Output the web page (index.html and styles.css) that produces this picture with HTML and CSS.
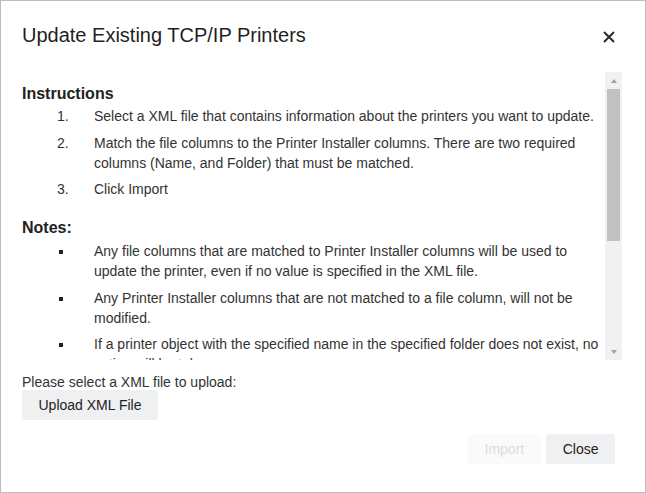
FILE: index.html
```html
<!DOCTYPE html>
<html lang="en">
<head>
<meta charset="utf-8">
<title>Update Existing TCP/IP Printers</title>
<link rel="stylesheet" href="styles.css">
</head>
<body>
<div class="dialog">
  <div class="header">
    <h2 class="title">Update Existing TCP/IP Printers</h2>
    <button class="close" aria-label="Close">
      <svg width="12" height="12" viewBox="0 0 12 12"><path d="M1 1L11 11M11 1L1 11" stroke="#2b2b2b" stroke-width="2" fill="none"/></svg>
    </button>
  </div>
  <div class="scroll-wrap">
    <div class="scroll-content">
      <h3 class="heading">Instructions</h3>
      <ol class="list list-num">
        <li><span class="marker">1.</span><span class="text">Select a XML file that contains information about the printers you want to update.</span></li>
        <li><span class="marker">2.</span><span class="text">Match the file columns to the Printer Installer columns. There are two required columns (Name, and Folder) that must be matched.</span></li>
        <li><span class="marker">3.</span><span class="text">Click Import</span></li>
      </ol>
      <h3 class="heading heading-notes">Notes:</h3>
      <ul class="list list-bullets">
        <li><span class="marker"><i class="square"></i></span><span class="text">Any file columns that are matched to Printer Installer columns will be used to update the printer, even if no value is specified in the XML file.</span></li>
        <li><span class="marker"><i class="square"></i></span><span class="text">Any Printer Installer columns that are not matched to a file column, will not be modified.</span></li>
        <li><span class="marker"><i class="square"></i></span><span class="text">If a printer object with the specified name in the specified folder does not exist, no action will be taken.</span></li>
      </ul>
    </div>
    <div class="scrollbar">
      <div class="sb-btn"><span class="tri-up"></span></div>
      <div class="sb-track"><div class="sb-thumb"></div></div>
      <div class="sb-btn"><span class="tri-down"></span></div>
    </div>
  </div>
  <div class="upload">
    <div class="upload-label">Please select a XML file to upload:</div>
    <button class="btn">Upload XML File</button>
  </div>
  <div class="footer">
    <button class="btn btn-disabled" disabled>Import</button>
    <button class="btn">Close</button>
  </div>
</div>
</body>
</html>
```
FILE: styles.css
```css
* { box-sizing: border-box; }
html, body { margin: 0; padding: 0; background: #fff; }
body { font-family: "Liberation Sans", Arial, sans-serif; color: #333; }

.dialog {
  width: 646px;
  height: 493px;
  border: 1px solid #bdbdbd;
  padding: 22px 23px 0 21px;
  background: #fff;
}

.header {
  display: flex;
  justify-content: space-between;
  align-items: flex-start;
  padding-right: 7px;
}
.title {
  margin: 0;
  font-size: 20px;
  font-weight: normal;
  line-height: 24px;
  color: #1f1f1f;
}
.close {
  margin: 8px 0 0;
  padding: 0;
  border: none;
  background: none;
  width: 12px;
  height: 12px;
  display: block;
}
.close svg { display: block; }

.scroll-wrap {
  display: flex;
  height: 288px;
  margin-top: 25px;
}
.scroll-content {
  flex: 1;
  overflow: hidden;
  padding-top: 13px;
}
.heading {
  margin: 0;
  font-size: 16px;
  font-weight: bold;
  line-height: 18px;
  color: #222;
}
.heading-notes { margin-top: 19.5px; }

.list {
  margin: 3px 0 0;
  padding: 0;
  list-style: none;
  font-size: 14px;
  line-height: 20px;
}
.list-bullets { margin-top: 4.5px; }
.list li {
  display: flex;
  padding-left: 35px;
  margin-bottom: 6.5px;
}
.marker {
  flex: 0 0 37px;
  width: 37px;
}
.text { flex: 1; }
.square {
  display: block;
  width: 4px;
  height: 4px;
  background: #222;
  margin: 9px 0 0 2px;
}

.scrollbar {
  flex: 0 0 17px;
  width: 17px;
  background: #f1f1f1;
  display: flex;
  flex-direction: column;
}
.sb-btn {
  height: 17px;
  display: flex;
  align-items: center;
  justify-content: center;
}
.sb-track {
  flex: 1;
  padding: 0 2px;
}
.sb-thumb {
  height: 152px;
  background: #c1c1c1;
}
.tri-up {
  width: 0; height: 0;
  border-left: 3.5px solid transparent;
  border-right: 3.5px solid transparent;
  border-bottom: 4px solid #a3a3a3;
}
.tri-down {
  width: 0; height: 0;
  border-left: 3.5px solid transparent;
  border-right: 3.5px solid transparent;
  border-top: 4px solid #a3a3a3;
}

.upload { margin-top: 14px; }
.upload-label {
  font-size: 14px;
  line-height: 16px;
  color: #333;
}
.btn {
  height: 30px;
  padding: 0 16.5px;
  border: none;
  border-radius: 3px;
  background: #eff0f2;
  font-family: "Liberation Sans", Arial, sans-serif;
  font-size: 14px;
  line-height: 16px;
  color: #222;
}
.footer {
  display: flex;
  justify-content: flex-end;
  gap: 5.5px;
  margin-top: 14px;
  padding-right: 7px;
}
.btn-disabled {
  background: #fafafa;
  color: #dcdcdc;
}
```
